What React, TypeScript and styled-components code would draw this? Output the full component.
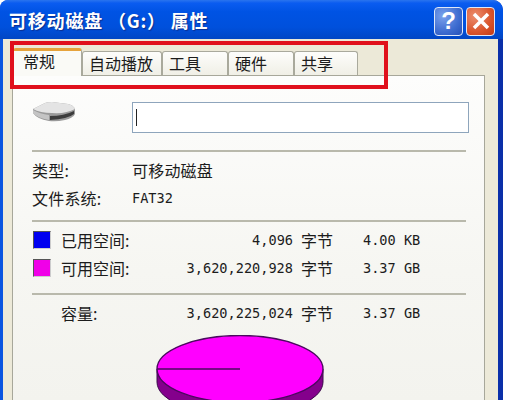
import React from "react";
import styled, { createGlobalStyle } from "styled-components";

const Global = createGlobalStyle`
  html, body { margin: 0; padding: 0; width: 506px; height: 400px; overflow: hidden; background: #fff; }
  #root { width: 506px; height: 400px; overflow: hidden; }
`;

const cjk = `"Noto Sans CJK SC", "Liberation Sans", sans-serif`;
const mono = `"DejaVu Sans Mono", "Noto Sans CJK SC", monospace`;

const Win = styled.div`
  position: relative;
  width: 503px;
  height: 400px;
  box-sizing: border-box;
  display: flex;
  flex-direction: column;
  border-radius: 8px 10px 0 0;
  background: linear-gradient(90deg, #0a55e0 0%, #0a55e0 50%, #0a2fa8 100%);
  overflow: hidden;
  font-family: ${cjk};
  color: #1c1c1c;
`;
const TitleBar = styled.div`
  height: 39px;
  flex: none;
  display: flex;
  align-items: center;
  justify-content: space-between;
  padding: 0 8px 0 9px;
  box-sizing: border-box;
  background: linear-gradient(180deg, #2a74ee 0%, #0a5cf0 8%, #0053e4 30%, #0050dc 70%, #0146c4 100%);
`;
const Title = styled.div`
  color: #fff;
  font-size: 18px;
  font-weight: 700;
  letter-spacing: 0.8px;
  white-space: pre;
  text-shadow: 1px 1px 1px #0b2f90;
`;
const Caption = styled.div`
  display: flex;
  gap: 3px;
  margin-top: 3px;
`;
const CapBtn = styled.div<{ $red?: boolean }>`
  width: 29px;
  height: 29px;
  box-sizing: border-box;
  border: 1.5px solid #dfe8f8;
  border-radius: 4px;
  display: flex;
  align-items: center;
  justify-content: center;
  color: #fff;
  font-family: "Liberation Sans", sans-serif;
  font-weight: 700;
  font-size: 24px;
  background: ${(p) =>
    p.$red
      ? "radial-gradient(circle at 30% 30%, #ec8f70, #d9542b 60%, #c23a14)"
      : "radial-gradient(circle at 30% 30%, #7ba2ec, #3e6cd0 60%, #2450b8)"};
`;
const Client = styled.div`
  flex: 1;
  min-height: 0;
  margin: 0 5px 0 3px;
  background: #ece9d8;
  padding: 8px 13px 0 9px;
  display: flex;
  flex-direction: column;
`;
const Tabs = styled.div`
  display: flex;
  align-items: flex-end;
  height: 28px;
  flex: none;
  padding-left: 1px;
`;
const Tab = styled.div<{ $active?: boolean; $w: number }>`
  width: ${(p) => p.$w}px;
  height: ${(p) => (p.$active ? 28 : 24)}px;
  box-sizing: border-box;
  display: flex;
  align-items: center;
  padding-left: ${(p) => (p.$active ? 9 : 6)}px;
  padding-bottom: ${(p) => (p.$active ? 5 : 1)}px;
  font-size: 16px;
  border-radius: 3px 3px 0 0;
  border: 1px solid #a9a99c;
  border-bottom: none;
  background: ${(p) => (p.$active ? "#fafaf6" : "linear-gradient(180deg,#fdfdfb,#f0efe6)")};
  border-top: ${(p) => (p.$active ? "3px solid #e6a33c" : "1px solid #a9a99c")};
  position: relative;
  z-index: ${(p) => (p.$active ? 2 : 1)};
  margin-bottom: ${(p) => (p.$active ? -1 : 0)}px;
`;
const Panel = styled.div`
  flex: 1;
  min-height: 0;
  border: 1px solid #a7a79a;
  border-bottom: none;
  background: linear-gradient(180deg, #fdfdfc 0%, #f6f6f2 60%, #f3f3ee 100%);
  padding: 26px 18px 0 19px;
  box-sizing: border-box;
  font-size: 16px;
`;
const IdentRow = styled.div`
  display: flex;
  align-items: flex-start;
  height: 48px;
`;
const DriveSlot = styled.div`
  width: 100px;
  flex: none;
  margin-top: -1px;
`;
const NameInput = styled.div`
  flex: 1;
  height: 31px;
  box-sizing: border-box;
  border: 1px solid #8ea5bc;
  background: #fff;
  display: flex;
  align-items: center;
  padding-left: 3px;
  margin-right: -3px;
`;
const Caret = styled.div`
  width: 1px;
  height: 17px;
  background: #222;
`;
const Divider = styled.div<{ $above: number; $below: number }>`
  height: 2px;
  background: #b9b9ac;
  margin: ${(p) => p.$above}px 0 ${(p) => p.$below}px;
`;
const InfoRow = styled.div`
  display: flex;
  align-items: center;
  height: 28px;
  letter-spacing: 0.2px;
`;
const InfoLabel = styled.div`
  width: 100px;
  flex: none;
`;
const MonoText = styled.span`
  font-family: ${mono};
  font-size: 13.6px;
  letter-spacing: 0;
`;
const SpaceRow = styled.div`
  display: grid;
  grid-template-columns: 29px 82px 150px 70px 1fr;
  align-items: center;
  height: 28px;
`;
const Swatch = styled.div<{ $c: string }>`
  width: 18px;
  height: 18px;
  margin-left: 1px;
  background: ${(p) => p.$c};
  border: 1px solid #555;
  border-right-color: #ccc;
  border-bottom-color: #ccc;
  box-sizing: border-box;
`;
const Bytes = styled(MonoText)`
  text-align: right;
  white-space: pre;
`;
const Unit = styled.div`
  padding-left: 8px;
`;
const Size = styled(MonoText)`
  white-space: pre;
`;
const PieWrap = styled.div`
  display: flex;
  justify-content: center;
  margin-top: 8px;
  padding-right: 18px;
`;
const Highlight = styled.div`
  position: absolute;
  left: 10px;
  top: 41px;
  width: 378px;
  height: 48px;
  box-sizing: border-box;
  border: 4px solid #e0101c;
  z-index: 5;
  pointer-events: none;
`;

const Drive = () => (
  <svg width="44" height="22" viewBox="0 0 44 22" style={{ display: "block" }}>
    <path d="M1 8 L13 2 Q15 1 20 1 L36 3 Q41 4 43 8 L43 13 Q41 17 33 19 Q24 21 17 20 Q5 18 1 12 Z" fill="#9a9a9a" />
    <path d="M1 8 L13 2 Q15 1 20 1 L36 3 Q41 4 43 8 Q34 13 20 12 Q8 12 1 8 Z" fill="#e4e4e4" />
    <path d="M18 15 Q32 15 42 10 L42 13 Q36 18 18 19 Z" fill="#3c3c3c" />
    <path d="M1 9 Q8 13 17 14 L17 19 Q5 17 1 12 Z" fill="#c4c4c4" />
  </svg>
);

const Pie = () => (
  <svg width="170" height="76" viewBox="0 0 170 76" style={{ display: "block" }}>
    <path d="M2 34 L2 47 A83 34 0 0 0 168 47 L168 34 Z" fill="#84008c" stroke="#3a0a4a" strokeWidth="1" />
    <ellipse cx="85" cy="34" rx="83" ry="33.5" fill="#ff00ff" stroke="#4a0a5e" strokeWidth="1.4" />
    <line x1="2" y1="34" x2="85" y2="34" stroke="#4a0a5e" strokeWidth="1.4" />
  </svg>
);

export default function App() {
  return (
    <>
      <Global />
      <Win>
        <TitleBar>
          <Title>可移动磁盘 （G:） 属性</Title>
          <Caption>
            <CapBtn>?</CapBtn>
            <CapBtn $red>
              <svg width="20" height="20" viewBox="0 0 20 20">
                <path d="M3 3 L17 17 M17 3 L3 17" stroke="#fff" strokeWidth="3.5" />
              </svg>
            </CapBtn>
          </Caption>
        </TitleBar>
        <Client>
          <Tabs>
            <Tab $active $w={69}>常规</Tab>
            <Tab $w={80}>自动播放</Tab>
            <Tab $w={66}>工具</Tab>
            <Tab $w={66}>硬件</Tab>
            <Tab $w={64}>共享</Tab>
          </Tabs>
          <Panel>
            <IdentRow>
              <DriveSlot><Drive /></DriveSlot>
              <NameInput><Caret /></NameInput>
            </IdentRow>
            <Divider $above={0} $below={4} />
            <InfoRow>
              <InfoLabel>类型:</InfoLabel>
              <div>可移动磁盘</div>
            </InfoRow>
            <InfoRow>
              <InfoLabel>文件系统:</InfoLabel>
              <MonoText>FAT32</MonoText>
            </InfoRow>
            <Divider $above={8} $below={4} />
            <SpaceRow>
              <Swatch $c="#0000f0" />
              <div>已用空间:</div>
              <Bytes>4,096</Bytes>
              <Unit>字节</Unit>
              <Size>4.00 KB</Size>
            </SpaceRow>
            <SpaceRow>
              <Swatch $c="#f000e8" />
              <div>可用空间:</div>
              <Bytes>3,620,220,928</Bytes>
              <Unit>字节</Unit>
              <Size>3.37 GB</Size>
            </SpaceRow>
            <Divider $above={11} $below={4} />
            <SpaceRow>
              <span />
              <div>容量:</div>
              <Bytes>3,620,225,024</Bytes>
              <Unit>字节</Unit>
              <Size>3.37 GB</Size>
            </SpaceRow>
            <PieWrap><Pie /></PieWrap>
          </Panel>
        </Client>
        <Highlight />
      </Win>
    </>
  );
}
